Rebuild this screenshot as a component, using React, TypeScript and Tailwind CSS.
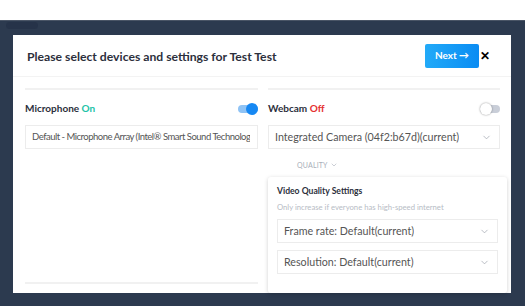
import { ChevronDown } from 'lucide-react'

function Toggle({ on }: { on: boolean }) {
  return (
    <div className="relative w-[20px] h-[12px] flex items-center">
      <div className={`w-[20px] h-[8px] rounded-full ${on ? 'bg-[#8fc3f5]' : 'bg-[#c9ced8]'}`} />
      <div
        className={`absolute top-0 w-[12px] h-[12px] rounded-full ${
          on ? 'right-0 bg-[#1688f3]' : 'left-0 bg-white shadow-[0_0_2px_rgba(0,0,0,0.45)]'
        }`}
      />
    </div>
  )
}

function Select({ label, chevron = true, small = false }: { label: string; chevron?: boolean; small?: boolean }) {
  return (
    <div className="h-[24px] border border-[#ececec] flex items-center justify-between pl-[6px] pr-[7px] overflow-hidden">
      <span
        className={`block min-w-0 overflow-hidden whitespace-nowrap text-[#555] ${
          small ? 'text-[9.5px] tracking-[-0.5px]' : 'text-[10.7px]'
        }`}
      >
        {label}
      </span>
      {chevron && <ChevronDown size={11} strokeWidth={1.5} className="text-[#9aa0aa] shrink-0" />}
    </div>
  )
}

export default function App() {
  return (
    <div className="w-[525px] h-[306px] overflow-hidden bg-white font-['Lato',sans-serif]">
      <div className="h-[20px] bg-white" />
      <div className="h-[286px] bg-[#2c3a4f] border-t border-[#4a5566] pt-[14px] pl-[13px] pr-[14px] relative">
        <div className="absolute left-[6px] top-[1px] w-[32px] h-[7px] bg-[#263349] rounded-sm" />
        <div className="relative bg-white h-[258px]">
          <div className="h-[42px] flex items-center justify-between pl-[14px] pr-[21px] pt-[3px] border-b border-[#f3f3f3]">
            <h1 className="text-[12.2px] font-bold text-[#2c2f3c]">Please select devices and settings for Test Test</h1>
            <div className="flex items-center gap-[1px] -mt-[3px]">
              <button className="w-[54px] h-[24px] rounded-[2px] bg-gradient-to-r from-[#22aaf8] to-[#0a8cf3] text-white text-[10px] font-bold">
                Next →
              </button>
              <span className="text-[12px] font-black text-black leading-none">✕</span>
            </div>
          </div>
          <div className="grid grid-cols-[233px_232px] gap-[10px] pl-[12px] pt-[11px]">
            <div className="border-t-2 border-[#f1f1f1] h-[196px] border-b-2 flex flex-col">
              <div className="h-[35px] pt-[2px] flex items-center justify-between">
                <span className="text-[10px] font-bold text-[#2c2f3c]">
                  Microphone <span className="text-[#1ec3a8]">On</span>
                </span>
                <Toggle on />
              </div>
              <Select small label="Default - Microphone Array (Intel® Smart Sound Technology (Intel® SST))" chevron={false} />
            </div>
            <div className="border-t-2 border-[#f1f1f1] flex flex-col">
              <div className="h-[35px] pt-[2px] flex items-center justify-between">
                <span className="text-[10px] font-bold text-[#2c2f3c]">
                  Webcam <span className="text-[#e53030]">Off</span>
                </span>
                <Toggle on={false} />
              </div>
              <Select label="Integrated Camera (04f2:b67d)(current)" />
              <div className="h-[28px] pt-[4px] flex items-center pl-[29px] gap-[2px] text-[7px] tracking-wide text-[#a9afba]">
                QUALITY <ChevronDown size={8} strokeWidth={1.8} />
              </div>
              <div className="w-[239px] h-[116px] rounded-[3px] bg-white shadow-[0_1px_4px_rgba(0,0,0,0.18)] px-[9px] pt-[8px]">
                <div className="text-[8.6px] font-bold text-[#2c2f3c]">Video Quality Settings</div>
                <div className="text-[7.7px] text-[#b7bcc5] mt-[4px] mb-[6px]">Only increase if everyone has high-speed internet</div>
                <div className="flex flex-col gap-[7px]">
                  <Select label="Frame rate: Default(current)" />
                  <Select label="Resolution: Default(current)" />
                </div>
              </div>
            </div>
          </div>
        </div>
      </div>
    </div>
  )
}
